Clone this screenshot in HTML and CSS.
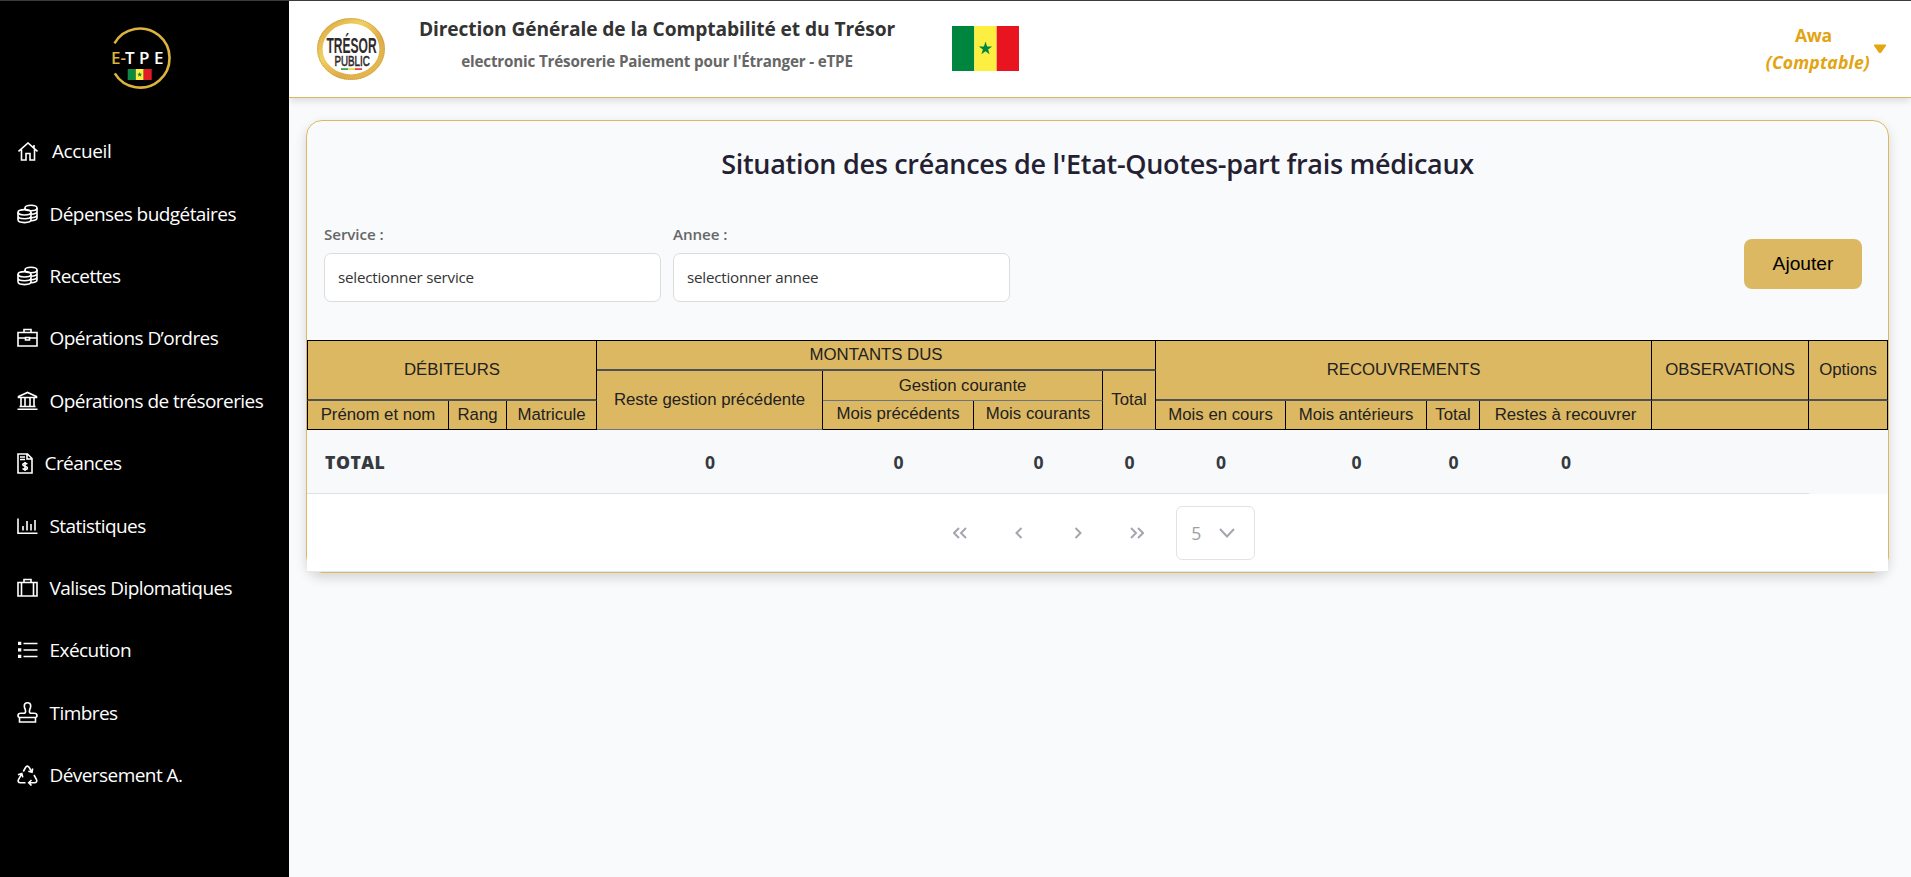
FILE: index.html
```html
<!DOCTYPE html>
<html lang="fr">
<head>
<meta charset="utf-8">
<title>eTPE</title>
<link rel="stylesheet" href="styles.css">
</head>
<body>
<div class="app">
  <aside class="sidebar">
    <div class="brand">
      <svg width="62" height="66" viewBox="0 0 62 66">
        <path d="M4.500 18.300A29.500 29.500 0 1 1 4.800 48.300" fill="none" stroke="#dcb33c" stroke-width="2.600"/>
        <text class="brand-e" x="1" y="39">E-</text>
        <text class="brand-tpe" x="15" y="39">T</text><text class="brand-tpe" x="29" y="39">P</text><text class="brand-tpe" x="44" y="39">E</text>
        <path d="M17.700 44h8v11h-8z" fill="#0b8a43"/><path d="M25.700 44h8v11h-8z" fill="#fdef42"/><path d="M33.700 44h8v11h-8z" fill="#e31b23"/>
        <path d="M29.700 47l.7 1.700 1.800.1-1.400 1.200.5 1.800-1.600-1-1.600 1 .5-1.800-1.400-1.200 1.800-.1z" fill="#0b8a43"/>
      </svg>
    </div>
    <nav class="menu">
      <a class="item home"><svg width="20" height="19" viewBox="0 0 20 19"><path d="M.5 9.500L10 1l9.500 8.500M3.500 7.500V18H8V11.500h4V18h4.500V7.500M16 3v3.500"/></svg><span>Accueil</span></a>
      <a class="item"><svg width="21" height="20" viewBox="0 0 21 20"><use href="#coins"/></svg><span>Dépenses budgétaires</span></a>
      <a class="item"><svg width="21" height="20" viewBox="0 0 21 20"><use href="#coins"/></svg><span>Recettes</span></a>
      <a class="item"><svg width="21" height="20" viewBox="0 0 21 20"><path d="M1 4.500h19v13.500H1zM7 4.500V1.500h7v3M1 10h7.500M12.500 10H20M8.500 9.500v2.500h4V9.500z"/></svg><span>Opérations D’ordres</span></a>
      <a class="item"><svg width="21" height="20" viewBox="0 0 21 20"><path d="M1.500 6.500v-1L10.500 1.500l9 4v1zM4 7v8M8 7v8M13 7v8M17 7v8M2.500 15.500h16M.5 18.300h20"/></svg><span>Opérations de trésoreries</span></a>
      <a class="item"><svg width="16" height="21" viewBox="0 0 16 21"><path d="M1 1h9.500L15 5.500V20H1zM10 1v5h5M3 4h5M3 6.500h5"/><path d="M10.300 11.200C9 9.700 5.800 10 5.800 11.700s4.600 1.200 4.600 3.200-3.500 2-4.800.5M8 9v9"/></svg><span>Créances</span></a>
      <a class="item"><svg width="21" height="20" viewBox="0 0 21 20"><path d="M1 2.500v14.800h19.500M6 10v4.500M10 5v9.500M14 8v6.500M18 4v10.500"/></svg><span>Statistiques</span></a>
      <a class="item"><svg width="21" height="20" viewBox="0 0 21 20"><path d="M1 4.500h19v13.500H1zM7 4.500V1.500h7v3M4.500 4.500V18M16.500 4.500V18"/></svg><span>Valises Diplomatiques</span></a>
      <a class="item"><svg width="21" height="20" viewBox="0 0 21 20"><path d="M6.500 3.500h14M6.500 10h14M6.500 16.500h14"/><path class="solid" d="M1 1.800h3.300v3.300H1zM1 8.300h3.300v3.300H1zM1 14.800h3.300v3.300H1z"/></svg><span>Exécution</span></a>
      <a class="item"><svg width="21" height="21" viewBox="0 0 21 21"><path d="M3 15.500C1.500 15.500 1 14.500 1 13.500 1 12 2.500 11.300 4 11.300H7.500C8.500 11 8.800 9.500 8.300 7.500 7.500 6 7.300 5 7.300 4a3.200 3.200 0 0 1 6.400 0c0 1-.2 2-1 3.500-.5 2-.2 3.500.8 3.800H17c1.500 0 3 .7 3 2.200 0 1-.5 2-2 2zM2.500 15.500V20h16V15.500"/></svg><span>Timbres</span></a>
      <a class="item"><svg width="21" height="21" viewBox="0 0 21 21"><path d="M6.300 6.500L8.500 2.500Q10.300-.3 12.200 2.500L14.800 7M15.700 3.500L15 7.200 11.300 6.200M17 10l2.500 4.500q1 3-2 3.200H12M14.500 15L11.700 17.700l2.800 2.800M8.500 17.700H3.500q-3.300-.3-2-3.200L4.700 8.800M1 9.800l3.800-1.200 1 3.800"/></svg><span>Déversement A.</span></a>
    </nav>
    <svg class="defs" width="0" height="0"><defs><g id="coins"><ellipse cx="14" cy="4" rx="6" ry="2.700"/><path d="M8 4v2M20 4v10c0 1.500-2.500 2.600-6 2.700M20 7.500c0 1.500-2.500 2.600-6 2.700M20 11c0 1.500-2.500 2.600-6 2.700"/><ellipse cx="7.500" cy="8.300" rx="6.500" ry="2.700"/><path d="M1 8.300v7.500c0 3.700 13 3.700 13 0V8.300M1 12c0 3.700 13 3.700 13 0"/></g></defs></svg>
  </aside>
  <div class="page">
    <header class="topbar">
      <svg class="seal" width="68" height="62" viewBox="0 0 68 62">
        <defs><linearGradient id="gold" x1="0" y1="0" x2="1" y2="1"><stop offset="0" stop-color="#d9a441"/><stop offset=".35" stop-color="#f0d060"/><stop offset=".65" stop-color="#dfac48"/><stop offset="1" stop-color="#e6c052"/></linearGradient></defs>
        <ellipse cx="34" cy="31" rx="31.200" ry="28.200" fill="#fff" stroke="url(#gold)" stroke-width="5.600"/>
        <ellipse cx="34" cy="31" rx="33.300" ry="30.300" fill="none" stroke="#c89a4e" stroke-width="1" stroke-dasharray="1 1"/>
        <g transform="translate(9.500 34.700) scale(.56 1)"><text class="seal-a">TRÉSOR</text></g>
        <g transform="translate(17.500 47.500) scale(.63 1)"><text class="seal-b">PUBLIC</text></g>
        <path d="M24 50.200h7v1.800h-7z" fill="#3fa35a"/><path d="M31 50.200h7v1.800h-7z" fill="#f2d94a"/><path d="M38 50.200h7v1.800h-7z" fill="#dd4450"/>
      </svg>
      <div class="org"><div class="org-name">Direction Générale de la Comptabilité et du Trésor</div><div class="org-sub">electronic Trésorerie Paiement pour l'Étranger - eTPE</div></div>
      <svg class="flag" width="67" height="45" viewBox="0 0 67 45"><path d="M0 0h22.300v45H0z" fill="#00853f"/><path d="M22.300 0h22.400v45H22.300z" fill="#fdef42"/><path d="M44.700 0H67v45H44.700z" fill="#e8141f"/><path d="M33.500 15.500l1.600 4.900h5.100l-4.100 3 1.500 4.900-4.100-3-4.100 3 1.500-4.900-4.100-3h5.100z" fill="#00853f"/></svg>
      <div class="user"><div class="user-text"><span>Awa</span><em>(Comptable)</em></div><svg width="14" height="10" viewBox="0 0 14 10"><path d="M1.500.5h11q1 .3.500 1.200L8 8.800q-1 .8-2 0L1 1.700Q.5.800 1.500.5z" fill="#e5a50f"/></svg></div>
    </header>
    <main class="card">
      <h1>Situation des créances de l'Etat-Quotes-part frais médicaux</h1>
      <div class="filters">
        <label class="field"><span>Service :</span><div class="select">selectionner service</div></label>
        <label class="field"><span>Annee :</span><div class="select">selectionner annee</div></label>
        <button class="add">Ajouter</button>
      </div>
      <table class="grid">
        <colgroup><col class="c1"><col class="c2"><col class="c3"><col class="c4"><col class="c5"><col class="c6"><col class="c7"><col class="c8"><col class="c9"><col class="c10"><col class="c11"><col class="c12"><col class="c13"></colgroup>
        <thead>
          <tr class="r1"><th colspan="3" rowspan="2" class="heavy first">DÉBITEURS</th><th colspan="4" class="heavy">MONTANTS DUS</th><th colspan="4" rowspan="2" class="heavy">RECOUVREMENTS</th><th rowspan="2" class="heavy">OBSERVATIONS</th><th rowspan="2" class="heavy">Options</th></tr>
          <tr class="r2"><th rowspan="2" class="soft">Reste gestion précédente</th><th colspan="2" class="soft">Gestion courante</th><th rowspan="2" class="soft">Total</th></tr>
          <tr class="r3"><th class="first">Prénom et nom</th><th>Rang</th><th>Matricule</th><th class="up">Mois précédents</th><th class="up">Mois courants</th><th>Mois en cours</th><th>Mois antérieurs</th><th>Total</th><th>Restes à recouvrer</th><th></th><th></th></tr>
        </thead>
        <tfoot><tr><td colspan="3" class="total">TOTAL</td><td>0</td><td>0</td><td>0</td><td>0</td><td>0</td><td>0</td><td>0</td><td>0</td><td></td><td class="bare"></td></tr></tfoot>
      </table>
      <div class="pager">
        <span class="pg"><svg width="14" height="12" viewBox="0 0 14 12"><path d="M6 1L1 6l5 5M13 1L8 6l5 5"/></svg></span>
        <span class="pg"><svg width="14" height="12" viewBox="0 0 14 12"><path d="M9.500 1l-5 5 5 5"/></svg></span>
        <span class="pg"><svg width="14" height="12" viewBox="0 0 14 12"><path d="M4.500 1l5 5-5 5"/></svg></span>
        <span class="pg"><svg width="14" height="12" viewBox="0 0 14 12"><path d="M1 1l5 5-5 5M8 1l5 5-5 5"/></svg></span>
        <div class="rows"><span>5</span><svg width="16" height="10" viewBox="0 0 16 10"><path d="M1 1l7 7.500L15 1"/></svg></div>
      </div>
    </main>
  </div>
</div>
</body>
</html>
```
FILE: styles.css
```css
* { box-sizing: border-box; }
body { margin: 0; background: #f8fafc; font-family: "Open Sans", "Noto Sans", sans-serif; color: #333; }
.app { display: flex; height: 877px; border-top: 1px solid #3b3b3b; overflow: hidden; }
.sidebar { width: 289px; flex: none; background: #000; color: #fff; }
.brand { height: 119px; padding: 24px 0 0 110px; }
.brand-e, .brand-tpe { font: 600 17px "Open Sans", sans-serif; fill: #fff; }
.brand-e { fill: #dcb33c; }
.menu { display: flex; flex-direction: column; }
.item { display: flex; align-items: center; height: 62.400px; padding-left: 16.500px; gap: 12px; font-size: 19px; letter-spacing: -0.560px; }
.item svg { fill: none; stroke: #fff; stroke-width: 1.600; flex: none; }
.item svg .solid { fill: #fff; stroke: none; }
.item.home { padding-left: 18px; gap: 14px; letter-spacing: -0.400px; }
.defs { display: block; }
.page { flex: 1; min-width: 0; }
.topbar { height: 97px; background: #fff; border-bottom: 1px solid #dfb760; box-shadow: 0 2px 8px rgba(0,0,0,.15); display: flex; align-items: flex-start; padding-left: 28px; }
.seal { margin-top: 17px; }
.seal-a, .seal-b { font: 700 21.500px "Liberation Sans", sans-serif; fill: #302b2b; }
.seal-b { font-size: 15.500px; font-weight: 400; stroke: #302b2b; stroke-width: .6px; }
.org { width: 480px; margin-left: 32px; padding-top: 13px; text-align: center; white-space: nowrap; }
.org-name { font-size: 19.200px; font-weight: 700; line-height: 30px; letter-spacing: -0.100px; color: #333; }
.org-sub { font-size: 15.200px; font-weight: 700; line-height: 30px; letter-spacing: -0.180px; color: #666; margin-top: 2px; }
.flag { margin: 25px 0 0 55px; }
.user { margin-left: auto; display: flex; align-items: center; gap: 3px; padding: 21px 24px 0 0; color: #e2a412; font-weight: 700; font-size: 17.600px; line-height: 27px; text-align: center; }
.user-text { display: flex; flex-direction: column; align-items: center; }
.user-text span { margin-right: 9px; letter-spacing: -0.400px; }
.user-text em { letter-spacing: 0.150px; }
.card { margin: 22px 22px 0 17px; height: 453px; border: 1px solid #dfb760; border-radius: 16px; box-shadow: 0 5px 12px rgba(0,0,0,.15); }
h1 { margin: 0; padding-top: 23px; height: 92px; text-align: center; font-size: 27px; font-weight: 600; line-height: 40px; letter-spacing: -0.300px; color: #251f33; }
.filters { display: flex; height: 127px; padding-left: 17px; gap: 12px; }
.field { width: 337px; font-size: 15.200px; font-weight: 600; color: #666; line-height: 24px; padding-top: 9px; letter-spacing: -0.100px; }
.select { margin-top: 7px; height: 49px; border: 1px solid #dcdcdc; border-radius: 7px; background: #fff; padding-left: 13px; font-size: 15.200px; font-weight: 400; line-height: 47px; letter-spacing: -0.220px; color: #333; }
.add { margin: 26px 26px 0 auto; width: 118px; height: 50px; border: 0; border-radius: 8px; background: #ddb862; font: 19.200px "Liberation Sans", Arial, sans-serif; color: #000; padding: 0; }
.grid { table-layout: fixed; width: 1581px; border-collapse: separate; border-spacing: 0; }
.c1 { width: 142px; } .c2 { width: 58px; } .c3 { width: 90px; } .c4 { width: 226px; } .c5 { width: 151px; } .c6 { width: 129px; } .c7 { width: 53px; } .c8 { width: 130px; } .c9 { width: 141px; } .c10 { width: 53px; } .c11 { width: 172px; } .c12 { width: 157px; } .c13 { width: 79px; }
.grid th { padding: 0; background: #ddb862; font: 16.800px/24px "Liberation Sans", Arial, sans-serif; color: #212121; border: 0 solid #000; border-right-width: 1px; border-bottom-width: 1px; white-space: nowrap; }
.grid th.first { border-left-width: 1px; }
.grid .r1 th { border-top-width: 1px; height: 31px; padding-bottom: 1px; }
.grid th.heavy { border-bottom: 2px solid #4d5155; }
.grid th.soft { border-bottom: 1px solid #6c757d; }
.grid .r2 th { height: 30px; }
.grid .r3 th { height: 29px; }
.grid .r3 th.up { padding-bottom: 2px; }
.grid td { height: 64px; padding: 0; text-align: center; font-size: 17.600px; font-weight: 700; color: #343a40; background: #f8f9fa; border-bottom: 1px solid #dee2e6; }
.grid td.bare { border-bottom-color: #f8f9fa; }
.grid td.total { text-align: left; padding-left: 18px; font-weight: 800; letter-spacing: 0.500px; }
.pager { height: 78px; background: #fff; border-bottom: 1px solid #e5e7eb; display: flex; justify-content: center; align-items: center; padding-right: 9px; }
.pager svg { fill: none; stroke: #a3a7ad; stroke-width: 2; }
.pg { width: 58.900px; display: flex; justify-content: center; }
.rows { margin-left: 10px; width: 79px; height: 54px; border: 1px solid #e2e3e8; border-radius: 6px; display: flex; align-items: center; justify-content: space-between; padding: 0 19px 0 14px; font-size: 17.600px; color: #9c9fa3; }
```
